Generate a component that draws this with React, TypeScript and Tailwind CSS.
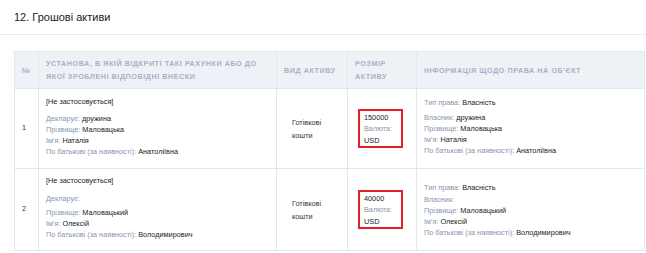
import React from 'react';

type Person = {
  declarant: string;
  surname: string;
  name: string;
  patronymic: string;
};

type Row = {
  n: number;
  person: Person;
  amount: string;
  currency: string;
  owner: string;
};

const rows: Row[] = [
  {
    n: 1,
    person: { declarant: 'дружина', surname: 'Маловацька', name: 'Наталія', patronymic: 'Анатоліївна' },
    amount: '150000',
    currency: 'USD',
    owner: 'дружина',
  },
  {
    n: 2,
    person: { declarant: '', surname: 'Маловацький', name: 'Олексій', patronymic: 'Володимирович' },
    amount: '40000',
    currency: 'USD',
    owner: '',
  },
];

function Field({ label, value, className = '' }: { label: string; value: string; className?: string }) {
  return (
    <div className={`leading-[11px] ${className}`}>
      <span className="text-[#8795ae]">{label}:</span>{' '}
      <span className="text-[#222]">{value}</span>
    </div>
  );
}

export default function App() {
  return (
    <div
      className="h-[253px] w-[646px] overflow-hidden bg-white"
      style={{ fontFamily: '"Liberation Sans", Arial, sans-serif' }}
    >
      <div className="flex h-[35px] items-center border-b border-[#e9ebee] pl-[14px] text-[11px] text-[#222]">
        12. Грошові активи
      </div>

      <div className="pl-[14px] pt-[16px]">
        <table className="w-[630px] table-fixed border-collapse text-[7.3px]">
          <colgroup>
            <col className="w-[24px]" />
            <col className="w-[238px]" />
            <col className="w-[71px]" />
            <col className="w-[69px]" />
            <col className="w-[228px]" />
          </colgroup>
          <thead>
            <tr className="h-[37px] bg-[#eef2f7] text-left align-middle text-[7.2px] font-bold uppercase leading-[13px] tracking-[0.55px] text-[#a7b1c5]">
              <th className="border border-[#e2e7ee] px-[7px] font-bold">№</th>
              <th className="border border-[#e2e7ee] px-[7px] font-bold">
                Установа, в якій відкриті такі рахунки або до якої зроблені відповідні внески
              </th>
              <th className="border border-[#e2e7ee] px-[7px] font-bold">Вид активу</th>
              <th className="border border-[#e2e7ee] px-[7px] font-bold">Розмір активу</th>
              <th className="border border-[#e2e7ee] px-[7px] font-bold">Інформація щодо права на об'єкт</th>
            </tr>
          </thead>
          <tbody>
            {rows.map((r) => (
              <tr key={r.n} className={r.n === 1 ? 'h-[80px]' : 'h-[82px]'}>
                <td className="border border-[#e2e7ee] px-[7px] align-middle text-[#333]">{r.n}</td>
                <td className="border border-[#e2e7ee] px-[7px] pb-[4px] align-middle">
                  <div className="leading-[11px] text-[#222]">[Не застосовується]</div>
                  <Field
                    label="Декларує"
                    value={r.person.declarant}
                    className={r.person.declarant ? 'mt-[6px]' : 'mt-[7px] h-[14px]'}
                  />
                  <Field label="Прізвище" value={r.person.surname} />
                  <Field label="Ім'я" value={r.person.name} />
                  <Field label="По батькові (за наявності)" value={r.person.patronymic} />
                </td>
                <td className="border border-[#e2e7ee] pl-[15px] pr-[7px] align-middle leading-[13px] text-[#333]">
                  Готівкові
                  <br />
                  кошти
                </td>
                <td className="border border-[#e2e7ee] pl-[10px] align-middle">
                  <div className="w-[45px] border-2 border-[#e3202a] px-[4px] pt-[0.5px] leading-[11.5px]">
                    <div className="text-[#222]">{r.amount}</div>
                    <div className="text-[#8795ae]">Валюта:</div>
                    <div className="text-[#222]">{r.currency}</div>
                  </div>
                </td>
                <td className={`border border-[#e2e7ee] px-[7px] align-middle ${r.n === 1 ? 'pb-[4px]' : ''}`}>
                  <Field label="Тип права" value="Власність" className={r.owner ? 'mb-[4px]' : 'mb-[1px]'} />
                  <Field label="Власник" value={r.owner} />
                  <Field label="Прізвище" value={r.person.surname} />
                  <Field label="Ім'я" value={r.person.name} />
                  <Field label="По батькові (за наявності)" value={r.person.patronymic} />
                </td>
              </tr>
            ))}
          </tbody>
        </table>
      </div>
    </div>
  );
}
